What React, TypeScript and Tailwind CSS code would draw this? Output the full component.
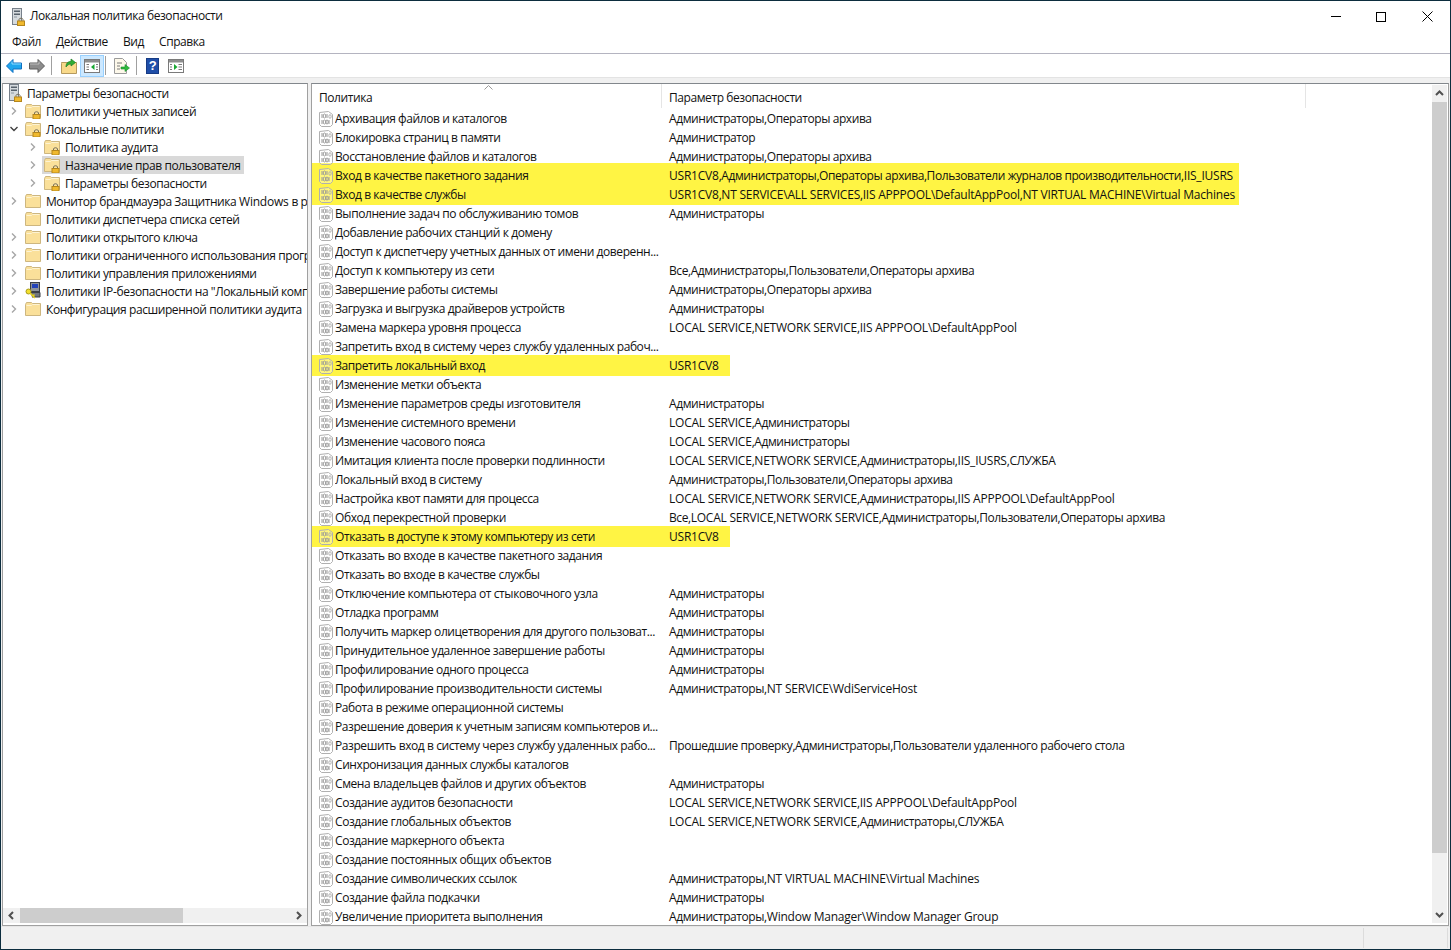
import { ReactNode } from "react";

const policies: [string, string, number?][] = [
  ["Архивация файлов и каталогов", "Администраторы,Операторы архива"],
  ["Блокировка страниц в памяти", "Администратор"],
  ["Восстановление файлов и каталогов", "Администраторы,Операторы архива"],
  ["Вход в качестве пакетного задания", "USR1CV8,Администраторы,Операторы архива,Пользователи журналов производительности,IIS_IUSRS", 2],
  ["Вход в качестве службы", "USR1CV8,NT SERVICE\\ALL SERVICES,IIS APPPOOL\\DefaultAppPool,NT VIRTUAL MACHINE\\Virtual Machines", 3],
  ["Выполнение задач по обслуживанию томов", "Администраторы"],
  ["Добавление рабочих станций к домену", ""],
  ["Доступ к диспетчеру учетных данных от имени доверенн...", ""],
  ["Доступ к компьютеру из сети", "Все,Администраторы,Пользователи,Операторы архива"],
  ["Завершение работы системы", "Администраторы,Операторы архива"],
  ["Загрузка и выгрузка драйверов устройств", "Администраторы"],
  ["Замена маркера уровня процесса", "LOCAL SERVICE,NETWORK SERVICE,IIS APPPOOL\\DefaultAppPool"],
  ["Запретить вход в систему через службу удаленных рабоч...", ""],
  ["Запретить локальный вход", "USR1CV8", 1],
  ["Изменение метки объекта", ""],
  ["Изменение параметров среды изготовителя", "Администраторы"],
  ["Изменение системного времени", "LOCAL SERVICE,Администраторы"],
  ["Изменение часового пояса", "LOCAL SERVICE,Администраторы"],
  ["Имитация клиента после проверки подлинности", "LOCAL SERVICE,NETWORK SERVICE,Администраторы,IIS_IUSRS,СЛУЖБА"],
  ["Локальный вход в систему", "Администраторы,Пользователи,Операторы архива"],
  ["Настройка квот памяти для процесса", "LOCAL SERVICE,NETWORK SERVICE,Администраторы,IIS APPPOOL\\DefaultAppPool"],
  ["Обход перекрестной проверки", "Все,LOCAL SERVICE,NETWORK SERVICE,Администраторы,Пользователи,Операторы архива"],
  ["Отказать в доступе к этому компьютеру из сети", "USR1CV8", 1],
  ["Отказать во входе в качестве пакетного задания", ""],
  ["Отказать во входе в качестве службы", ""],
  ["Отключение компьютера от стыковочного узла", "Администраторы"],
  ["Отладка программ", "Администраторы"],
  ["Получить маркер олицетворения для другого пользоват...", "Администраторы"],
  ["Принудительное удаленное завершение работы", "Администраторы"],
  ["Профилирование одного процесса", "Администраторы"],
  ["Профилирование производительности системы", "Администраторы,NT SERVICE\\WdiServiceHost"],
  ["Работа в режиме операционной системы", ""],
  ["Разрешение доверия к учетным записям компьютеров и...", ""],
  ["Разрешить вход в систему через службу удаленных рабо...", "Прошедшие проверку,Администраторы,Пользователи удаленного рабочего стола"],
  ["Синхронизация данных службы каталогов", ""],
  ["Смена владельцев файлов и других объектов", "Администраторы"],
  ["Создание аудитов безопасности", "LOCAL SERVICE,NETWORK SERVICE,IIS APPPOOL\\DefaultAppPool"],
  ["Создание глобальных объектов", "LOCAL SERVICE,NETWORK SERVICE,Администраторы,СЛУЖБА"],
  ["Создание маркерного объекта", ""],
  ["Создание постоянных общих объектов", ""],
  ["Создание символических ссылок", "Администраторы,NT VIRTUAL MACHINE\\Virtual Machines"],
  ["Создание файла подкачки", "Администраторы"],
  ["Увеличение приоритета выполнения", "Администраторы,Window Manager\\Window Manager Group"],
];

// the latin runs are set a bit wider than the cyrillic ones
const Mixed = ({ text }: { text: string }) => (
  <>
    {text.split(/([A-Za-z0-9\\_][A-Za-z0-9\\_ ]*)/).map((part, i) =>
      i % 2 ? (
        <span key={i} className="tracking-[-0.22px]">{part}</span>
      ) : (
        part
      )
    )}
  </>
);

const Lock = ({ x, y }: { x: number; y: number }) => (
  <g transform={`translate(${x} ${y})`}>
    <path d="M2 3.5V2C2 .3 6 .3 6 2V3.5" fill="none" stroke="#77705c" strokeWidth="1" />
    <rect x="0.5" y="3.5" width="7" height="4.5" fill="#f0b92e" stroke="#b5861c" strokeWidth="1" />
  </g>
);

const Folder = ({ lock }: { lock?: boolean }) => (
  <svg width="16" height="16" viewBox="0 0 16 16" className="shrink-0">
    <path d="M.5 3.5V14.5H15.5V2.5H7.5L6.5 1.5H1.5Z" fill="#fae09a" stroke="#cdb67f" />
    <path d="M1.5 4.5H6.5L7.5 3.5H14.5" fill="none" stroke="#fdf3d3" />
    {lock && <Lock x={7.5} y={8} />}
  </svg>
);

const ServerLock = () => (
  <svg width="16" height="18" viewBox="0 0 16 18" className="shrink-0">
    <rect x="1.5" y="0.5" width="9" height="16" fill="#d5dade" stroke="#77808a" />
    <rect x="3" y="2.5" width="6" height="1.5" fill="#56606b" />
    <rect x="3" y="5.5" width="6" height="1.5" fill="#56606b" />
    <rect x="3" y="8.5" width="3" height="1" fill="#8b95a0" />
    <Lock x={6} y={9.5} />
  </svg>
);

const IpSecurity = () => (
  <svg width="16" height="18" viewBox="0 0 16 18" className="shrink-0">
    <rect x="5.5" y="0.5" width="9" height="9" fill="#8d939b" stroke="#3b3f46" />
    <rect x="7" y="2" width="6" height="4" fill="#2242b8" />
    <path d="M5 10.5H15V15H7" fill="#71767d" stroke="#3b3f46" />
    <circle cx="3.5" cy="9.5" r="2.5" fill="#f2df2c" stroke="#a89a18" />
    <path d="M5 11L10 16M8 14L9.5 12.5" fill="none" stroke="#e5cf1d" strokeWidth="1.6" />
  </svg>
);

const PolicyIcon = () => (
  <svg width="14" height="16" viewBox="0 0 14 16" className="shrink-0 mr-[2px]">
    <path d="M.5 1.5L9.5.5L13.5 3.5V13.5L11.5 15.5H2.5L.5 13.5Z" fill="#fff" fillOpacity="0.3" stroke="#b0b0b0" />
    <path d="M3 3V7M8 3V7M3 9V13M10 9V13" stroke="#999" />
    <ellipse cx="5.5" cy="5" rx="1.3" ry="2" fill="none" stroke="#999" />
    <ellipse cx="5.5" cy="11" rx="1.3" ry="2" fill="none" stroke="#999" />
    <ellipse cx="11" cy="5.5" rx="1.2" ry="1.8" fill="none" stroke="#b0b0b0" />
    <ellipse cx="8" cy="11" rx="1.2" ry="2" fill="none" stroke="#999" />
  </svg>
);

const Chevron = ({ open }: { open?: boolean }) => (
  <svg width="10" height="10" viewBox="0 0 10 10" className="shrink-0">
    {open ? (
      <path d="M1.5 3L5 6.5L8.5 3" fill="none" stroke="#404040" strokeWidth="1.4" />
    ) : (
      <path d="M3 1.5L6.5 5L3 8.5" fill="none" stroke="#a6a6a6" strokeWidth="1.4" />
    )}
  </svg>
);

const ScrollArrow = ({ d }: { d: string }) => (
  <svg width="9" height="9" viewBox="0 0 9 9">
    <path d={d} fill="none" stroke="#505050" strokeWidth="2" />
  </svg>
);

const TreeRow = ({ level, chevron, icon, text, selected }: { level: 1 | 2; chevron?: "open" | "closed"; icon: ReactNode; text: string; selected?: boolean }) => (
  <div className={`flex h-[18px] items-center whitespace-nowrap ${level === 1 ? "pl-[6px]" : "pl-[25px]"}`}>
    <div className="w-[14px] shrink-0">{chevron && <Chevron open={chevron === "open"} />}</div>
    <div className={`flex h-[18px] items-center pl-[2px] pr-[4px] ${selected ? "bg-[#d9d9d9]" : ""}`}>
      <div className="w-[16px] shrink-0">{icon}</div>
      <span className="ml-[5px] leading-[17px]"><Mixed text={text} /></span>
    </div>
  </div>
);

const Sep = ({ className }: { className: string }) => <div className={`w-px h-[19px] bg-[#a0a0a0] ${className}`} />;

const Toolbar = () => (
  <div className="flex h-[23px] items-center pl-[5px]">
    <svg width="16" height="14" viewBox="0 0 16 14" className="mr-[7px]">
      <path d="M.5 7L7 .5V4H15.5V10H7V13.5Z" fill="#1ea6ee" stroke="#0f6fc0" />
      <path d="M6 2.5V5H15" fill="none" stroke="#8fdcff" />
    </svg>
    <svg width="16" height="14" viewBox="0 0 16 14" className="mr-[6px]">
      <path d="M15.5 7L9 .5V4H.5V10H9V13.5Z" fill="#8c8c8c" stroke="#5c5c5c" />
      <path d="M1 5H10V2.5" fill="none" stroke="#bdbdbd" />
    </svg>
    <Sep className="mr-[9px]" />
    <svg width="16" height="16" viewBox="0 0 16 16" className="mr-[3px]">
      <path d="M.5 5.5V15.5H15.5V4.5H.5Z" fill="#f8d98a" stroke="#b59a5e" />
      <path d="M5 9C5 5 7 3.5 10 3.5V1L14.5 4.5L10 8V6C8 6 6.5 7 5 9Z" fill="#2fae35" stroke="#1b7d25" strokeWidth="0.7" />
    </svg>
    <div className="flex h-[22px] w-[24px] items-center justify-center border border-[#99d1ff] bg-[#cce8ff] mr-[1px]">
      <svg width="16" height="14" viewBox="0 0 16 14">
        <rect x=".5" y=".5" width="15" height="13" fill="#fff" stroke="#7a7a7a" />
        <rect x="1" y="1" width="14" height="2.5" fill="#8e8e8e" />
        <path d="M2.5 5.5H5M2.5 8H5M2.5 10.5H5M12 5.5H14M12 8H14M12 10.5H14" stroke="#7a7a7a" />
        <path d="M10.5 5L7 8L10.5 11Z" fill="#1aa832" />
      </svg>
    </div>
    <Sep className="mr-[8px]" />
    <svg width="16" height="16" viewBox="0 0 16 16" className="mr-[6px]">
      <path d="M.5.5H8.5L12.5 4.5V15.5H.5Z" fill="#fdf8ea" stroke="#9b9b9b" />
      <path d="M3 5H8M3 8H6M3 11H6" stroke="#7a7a7a" />
      <path d="M7 9H11V6.5L15.5 10L11 13.5V11H7Z" fill="#2dbb3c" stroke="#1a8a2a" strokeWidth="0.6" />
    </svg>
    <Sep className="mr-[9px]" />
    <div className="flex h-[16px] w-[13px] items-center justify-center bg-[#1f4ea8] border border-[#163b85] text-white text-[13px] font-bold leading-none mr-[9px] font-['Liberation_Sans',sans-serif]">?</div>
    <svg width="16" height="14" viewBox="0 0 16 14">
      <rect x=".5" y=".5" width="15" height="13" fill="#fff" stroke="#7a7a7a" />
      <rect x="1" y="1" width="14" height="2.5" fill="#8e8e8e" />
      <path d="M2 5.5H4M2 8H4M2 10.5H4M10.5 5.5H14M10.5 8H14M10.5 10.5H14" stroke="#7a7a7a" />
      <path d="M6 5L9.5 8L6 11Z" fill="#1aa832" />
    </svg>
  </div>
);

const App = () => {
  return (
    <div className="flex h-[950px] w-[1451px] flex-col overflow-hidden border border-[#0c2d3e] bg-white text-[12px] text-[#111] font-['Open_Sans',sans-serif] tracking-[-0.42px]">
      <div className="flex h-[31px] shrink-0 items-center pl-[10px]">
        <ServerLock />
        <span className="ml-[3px] -mt-px">Локальная политика безопасности</span>
        <div className="ml-auto flex items-center">
          <div className="h-px w-[10px] bg-black mr-[35px]" />
          <div className="h-[10px] w-[10px] border border-black mr-[36px]" />
          <svg width="11" height="11" viewBox="0 0 11 11" className="mr-[17px]">
            <path d="M.5.5L10.5 10.5M10.5.5L.5 10.5" stroke="#000" />
          </svg>
        </div>
      </div>
      <div className="flex h-[22px] shrink-0 items-center border-b border-[#b4b4c0] pl-[11px] pb-[1px]">
        <span className="w-[44px]">Файл</span>
        <span className="w-[67px]">Действие</span>
        <span className="w-[36px]">Вид</span>
        <span>Справка</span>
      </div>
      <Toolbar />
      <div className="h-[6px] shrink-0 bg-[#f0f0f0] border-t border-[#e3e3e3]" />
      <div className="flex min-h-0 flex-1 bg-[#f0f0f0] pl-[1px] pr-[1px] gap-[3px]">
        <div className="flex w-[306px] shrink-0 flex-col border border-t-[#82878c] border-x-[#a0a0a0] border-b-[#a0a0a0] bg-white">
          <div className="min-h-0 flex-1 overflow-hidden">
            <div className="flex h-[18px] items-center whitespace-nowrap pl-[5px]">
              <div className="w-[14px]"><ServerLock /></div>
              <span className="ml-[5px] mt-[2px]">Параметры безопасности</span>
            </div>
            <TreeRow level={1} chevron="closed" icon={<Folder lock />} text="Политики учетных записей" />
            <TreeRow level={1} chevron="open" icon={<Folder lock />} text="Локальные политики" />
            <TreeRow level={2} chevron="closed" icon={<Folder lock />} text="Политика аудита" />
            <TreeRow level={2} chevron="closed" icon={<Folder lock />} text="Назначение прав пользователя" selected />
            <TreeRow level={2} chevron="closed" icon={<Folder lock />} text="Параметры безопасности" />
            <TreeRow level={1} chevron="closed" icon={<Folder />} text="Монитор брандмауэра Защитника Windows в режиме повышенной безопасности" />
            <TreeRow level={1} icon={<Folder />} text="Политики диспетчера списка сетей" />
            <TreeRow level={1} chevron="closed" icon={<Folder />} text="Политики открытого ключа" />
            <TreeRow level={1} chevron="closed" icon={<Folder />} text="Политики ограниченного использования программ" />
            <TreeRow level={1} chevron="closed" icon={<Folder />} text="Политики управления приложениями" />
            <TreeRow level={1} chevron="closed" icon={<IpSecurity />} text={'Политики IP-безопасности на "Локальный компьютер"'} />
            <TreeRow level={1} chevron="closed" icon={<Folder />} text="Конфигурация расширенной политики аудита" />
          </div>
          <div className="flex h-[15px] shrink-0 items-center bg-[#f0f0f0] mb-[2px]">
            <div className="flex h-full w-[17px] items-center justify-center"><ScrollArrow d="M6 1L2.5 4.5L6 8" /></div>
            <div className="h-full w-[163px] bg-[#cdcdcd]" />
            <div className="flex-1" />
            <div className="flex h-full w-[17px] items-center justify-center"><ScrollArrow d="M3 1L6.5 4.5L3 8" /></div>
          </div>
        </div>
        <div className="flex min-w-0 flex-1 border border-t-[#82878c] border-x-[#a0a0a0] border-b-[#a0a0a0] bg-white">
          <div className="relative isolate min-w-0 flex-1 overflow-hidden">
            <div className="flex h-[25px]">
              <div className="h-[24px] w-[350px] border-r border-[#e5e5e5] pl-[7px] pt-[5px]">Политика</div>
              <div className="h-[24px] w-[644px] border-r border-[#e5e5e5] pl-[7px] pt-[5px]">Параметр безопасности</div>
            </div>
            <svg width="9" height="5" viewBox="0 0 9 5" className="absolute left-[172px] top-[1px]">
              <path d="M.5 4.5L4.5.5L8.5 4.5" fill="none" stroke="#9a9a9a" />
            </svg>
            {policies.map(([name, value, mark]) => (
              <div key={name} className="relative flex h-[19px] items-center whitespace-nowrap pl-[7px]">
                {/* marker strokes drawn over the screenshot, they run past the row */}
                {mark === 1 && <div className="absolute left-0 -top-px -bottom-px -z-10 w-[418px] bg-[#fff444]" />}
                {mark === 2 && <div className="absolute left-0 -top-[3px] bottom-0 -z-10 w-[927px] bg-[#fff444]" />}
                {mark === 3 && <div className="absolute left-0 top-0 -bottom-px -z-10 w-[927px] bg-[#fff444]" />}
                <PolicyIcon />
                <span className="w-[334px] shrink-0 overflow-hidden">{name}</span>
                <span><Mixed text={value} /></span>
              </div>
            ))}
          </div>
          <div className="flex w-[15px] shrink-0 flex-col bg-[#f0f0f0] mr-[1px] mt-px mb-[2px]">
            <div className="flex h-[17px] items-center justify-center"><ScrollArrow d="M1 6L4.5 2.5L8 6" /></div>
            <div className="h-[751px] bg-[#cdcdcd]" />
            <div className="flex-1" />
            <div className="flex h-[17px] items-center justify-center"><ScrollArrow d="M1 3L4.5 6.5L8 3" /></div>
          </div>
        </div>
      </div>
      <div className="flex h-[23px] shrink-0 justify-end bg-[#f0f0f0] border-t border-[#e6e6e6] pt-[1px] pb-[1px]">
        <div className="w-[85px] border-x border-[#dcdcdc] mr-[2px]" />
      </div>
    </div>
  );
};

export default App;
